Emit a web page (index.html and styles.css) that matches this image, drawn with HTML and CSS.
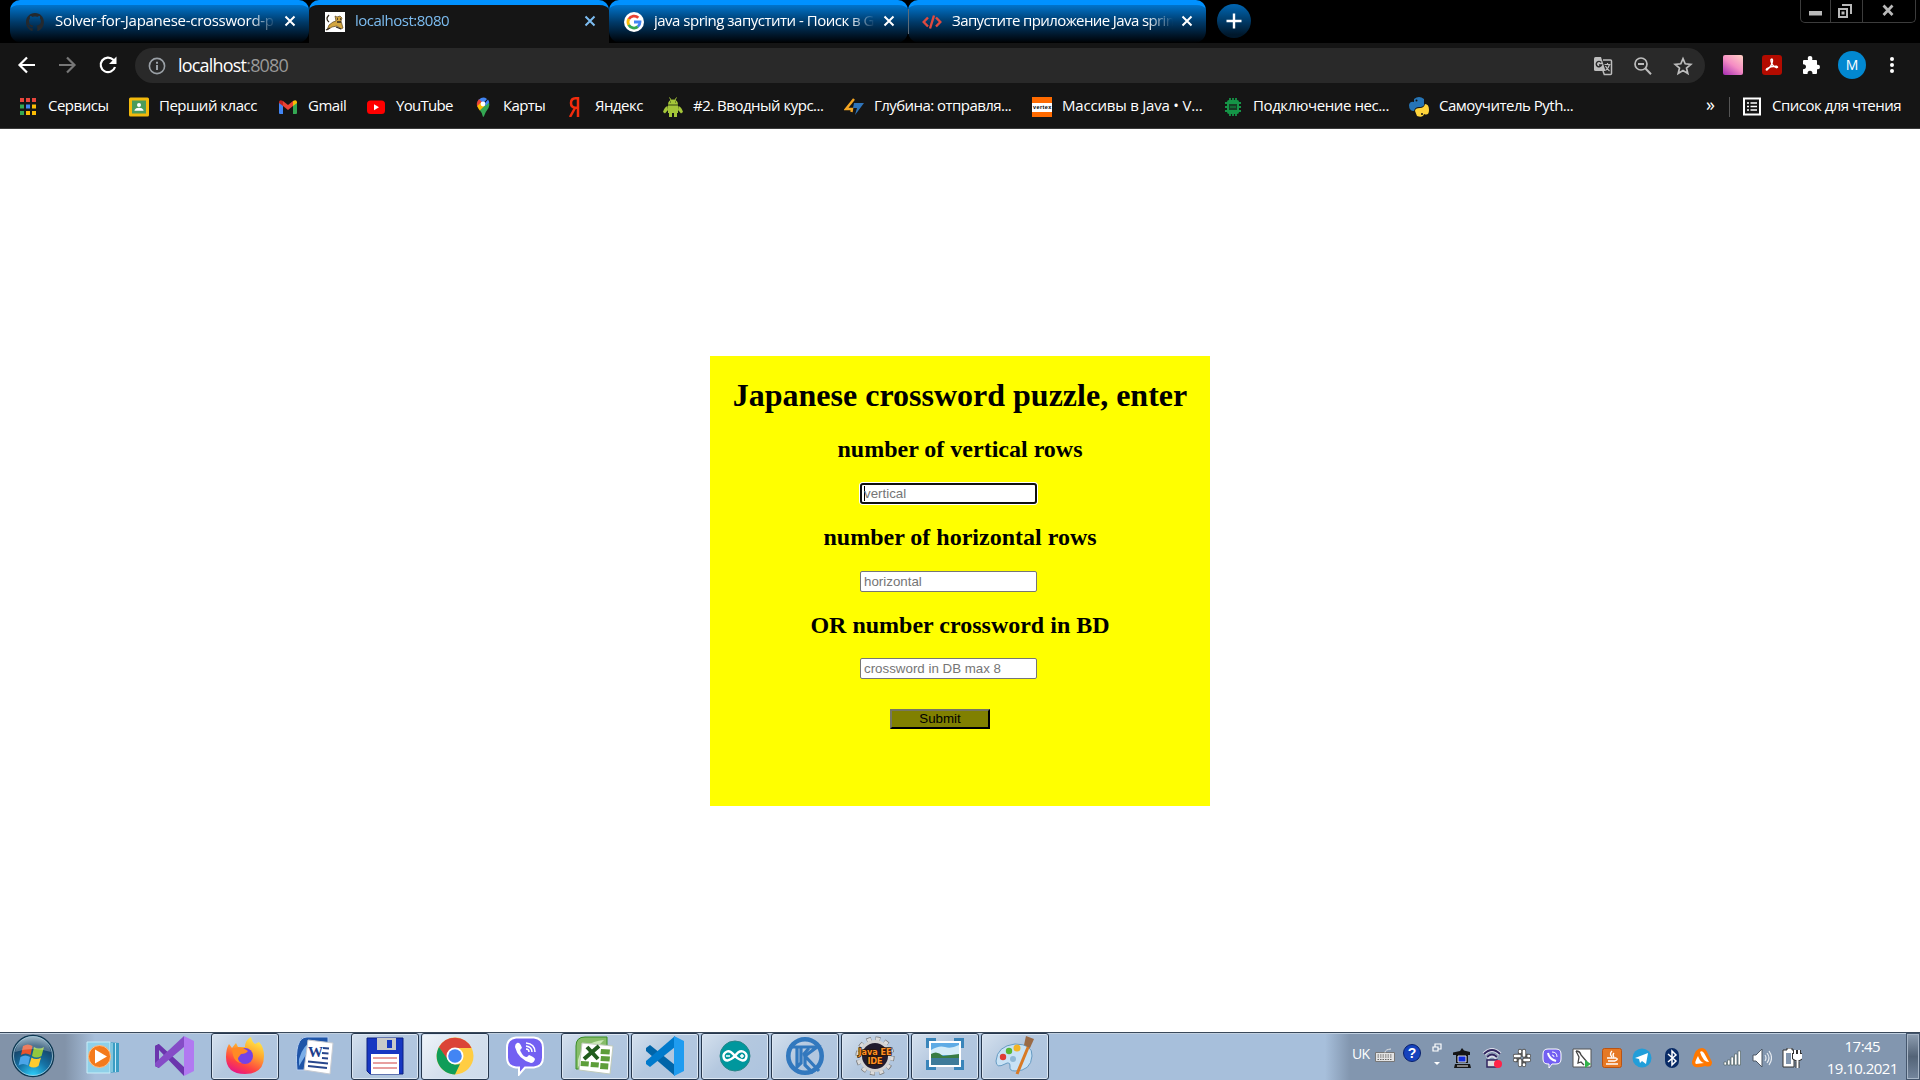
FILE: index.html
```html
<!DOCTYPE html>
<html lang="uk">
<head>
<meta charset="utf-8">
<title>localhost:8080</title>
<link rel="stylesheet" href="styles.css">
</head>
<body>
<header class="tabstrip">
  <div class="tab">
    <svg class="fav" viewBox="0 0 20 20"><path fill="#24292e" d="M10 1C4.800 1 1 5 1 10.200c0 4 2.500 7.500 6 8.700.5.100.6-.2.6-.5v-2.300c-2.500.5-3.200-1-3.400-1.800-.4-.8-1-1-1.400-1.400 1.400-.3 1.900.8 2.500 1.600.7.900 1.800.8 2.400.5.100-.6.400-1 .7-1.300-2.300-.3-4.400-1.200-4.400-4.700 0-1 .4-1.900 1-2.600-.2-.6-.3-1.400.1-2.500 1 0 1.900.5 2.600 1 1.500-.4 3-.4 4.500 0 .8-.5 1.600-1 2.600-1 .4 1.100.3 1.900.1 2.500.6.700 1 1.500 1 2.600 0 3.500-2.200 4.400-4.400 4.700.4.400.8 1 .8 2v2.700c0 .3.200.6.600.5 3.500-1.200 6-4.600 6-8.700C19 5 15.200 1 10 1z"/></svg>
    <span class="tab-title t1">Solver-for-Japanese-crossword-p</span>
    <svg class="x" viewBox="0 0 12 12"><path d="M1.500 1.500l9 9m0-9l-9 9"/></svg>
  </div>
  <div class="tab active">
    <svg class="fav" viewBox="0 0 20 20"><path fill="#fff" d="M0 0h20v20H0z"/><path fill="#d2a53f" stroke="#5c4520" stroke-width=".7" d="M10 4l2 1 3-1 2 2-1 3 2 7-2 1-4-3-5 1-5 3 2-5 4-3 3-1z"/><path fill="none" stroke="#332b20" stroke-width="1.300" d="M4 10Q0 7 4 3M1 18l4-2M12 7h1m2 0h1m-4 3h4M11 15l5 2"/></svg>
    <span class="tab-title t2">localhost:8080</span>
    <svg class="x" viewBox="0 0 12 12"><path d="M1.500 1.500l9 9m0-9l-9 9"/></svg>
  </div>
  <div class="tab">
    <svg class="fav" viewBox="0 0 20 20"><circle cx="10" cy="10" r="10" fill="#fff"/><g fill="none" stroke-width="2.800"><path stroke="#ea4335" d="M4.800 7.200A6 6 0 0 1 14.300 5.800"/><path stroke="#fbbc05" d="M4.800 7a6 6 0 0 0 0 6"/><path stroke="#34a853" d="M4.700 12.800a6 6 0 0 0 9.200 1.800"/><path stroke="#4285f4" d="M10 10h6q0 3-2.200 4.700"/></g></svg>
    <span class="tab-title t3">java spring запустити - Поиск в G</span>
    <svg class="x" viewBox="0 0 12 12"><path d="M1.500 1.500l9 9m0-9l-9 9"/></svg>
  </div>
  <i class="tab-div"></i>
  <div class="tab last">
    <svg class="fav" viewBox="0 0 20 20"><path fill="none" stroke="#e04a3f" stroke-width="2.400" d="M6 5.500L1.700 10 6 14.500M14 5.500l4.300 4.500-4.300 4.500M12 3.500L8 16.500"/></svg>
    <span class="tab-title t4">Запустите приложение Java sprin</span>
    <svg class="x" viewBox="0 0 12 12"><path d="M1.500 1.500l9 9m0-9l-9 9"/></svg>
  </div>
  <div class="newtab"><svg width="16" height="16" viewBox="0 0 16 16"><path d="M8 .5v15M.5 8h15" stroke="#fff" stroke-width="2.400"/></svg></div>
  <div class="winctl">
    <span class="wmin"><svg width="13" height="22" viewBox="0 0 13 22"><path fill="#b9b9b9" d="M0 11h13v4.500H0z"/></svg></span>
    <span class="wres"><svg width="16" height="22" viewBox="0 0 16 22"><path fill="none" stroke="#b9b9b9" stroke-width="2" d="M5 5h9v9M2 9h8v8H2z"/><path fill="#b9b9b9" d="M4.500 11.500h3v3h-3z"/></svg></span>
    <span class="wcls"><svg width="12" height="22" viewBox="0 0 12 22"><path stroke="#b9b9b9" stroke-width="2.700" d="M1.500 5.500l9 9.500m0-9.500l-9 9.500"/></svg></span>
  </div>
</header>

<nav class="toolbar">
  <svg class="nav-ic back" viewBox="0 0 20 20"><path d="M18 10H3M10 2.500L2.500 10l7.500 7.500"/></svg>
  <svg class="nav-ic fwd" viewBox="0 0 20 20"><path d="M2 10h15M10 2.500l7.500 7.500-7.500 7.500"/></svg>
  <svg class="nav-ic rel" viewBox="0 0 20 20"><path d="M17 12A7.300 7.300 0 1 1 15.300 4.800L17 6.500"/><path fill="#fff" stroke="none" d="M18.500 1.500V9H11z"/></svg>
  <div class="omnibox">
    <svg width="18" height="18" viewBox="0 0 18 18"><circle cx="9" cy="9" r="7.600" fill="none" stroke="#9aa0a6" stroke-width="1.600"/><path fill="#9aa0a6" d="M8 8h2v5H8zM8 4.700h2v2H8z"/></svg>
    <span class="url">localhost<span class="port">:8080</span></span>
    <div class="omni-actions">
      <svg width="20" height="20" viewBox="0 0 20 20"><path fill="#bdbdbd" d="M2.500 1H8l4.500 14H2.500Q1 15 1 13.500v-11Q1 1 2.500 1z"/><path fill="none" stroke="#bdbdbd" stroke-width="1.500" d="M10 4h7.500q1 0 1 1v12.500q0 1-1 1h-6.200L10 15"/><path fill="none" stroke="#29292a" stroke-width="1.400" d="M8.200 6.500A2.700 2.700 0 1 0 8.500 9H6"/><path fill="none" stroke="#bdbdbd" stroke-width="1.200" d="M11.500 8.500h6M14.500 7v1.500M16.500 8.500q-1 4-4 6M12.500 10q1.500 3 4 5"/></svg>
      <svg width="20" height="20" viewBox="0 0 20 20"><circle cx="8" cy="8" r="6" fill="none" stroke="#bdbdbd" stroke-width="1.700"/><path stroke="#bdbdbd" stroke-width="2" d="M12.500 12.500L18 18.300M5 8h6"/></svg>
      <svg width="20" height="20" viewBox="0 0 20 20"><path fill="none" stroke="#bdbdbd" stroke-width="1.700" d="M10 2.600l2.200 5.200 5.600.5-4.300 3.700 1.300 5.500-4.800-3-4.800 3 1.300-5.500L2.200 8.300l5.600-.5z"/></svg>
    </div>
  </div>
  <div class="extensions">
    <span class="pink"></span>
    <svg width="20" height="20" viewBox="0 0 20 20"><rect width="20" height="20" rx="3" fill="#b30b00"/><path fill="none" stroke="#fff" stroke-width="1.400" d="M9 4.500q1.700-1.500 1.500 1.500Q10 11 5 15q-1.500 0 0-1.500 4-2.500 9.500-2.300 2 1 .3 1.500-3.300-.7-5-4Q8.500 6 9 4.500z"/></svg>
    <svg width="20" height="20" viewBox="0 0 20 20"><path fill="#fff" d="M3 5h4Q6 1 9 1t2.200 4H15q1 0 1 1v3.800q3-.5 3 2.200t-3 2.200V18q0 1-1 1h-3.500q0-3.300-2.500-3.300T6.500 19H3q-1 0-1-1v-3.700q3-.3 3-2.500T2 9.300V6q0-1 1-1z"/></svg>
    <span class="avatar">M</span>
    <svg width="6" height="20" viewBox="0 0 6 20"><g fill="#fff"><circle cx="3" cy="4" r="2"/><circle cx="3" cy="10" r="2"/><circle cx="3" cy="16" r="2"/></g></svg>
  </div>
</nav>

<nav class="bookmarks">
  <a class="bm b1"><svg viewBox="0 0 20 20"><g fill="#e8453c"><path d="M2 1h4v4H2zM8 1h4v4H8zM14 1h4v4h-4z"/></g><path fill="#34a853" d="M2 7.500h4v4H2zM2 14h4v4H2z"/><path fill="#4285f4" d="M8 7.500h4v4H8z"/><path fill="#fbbc05" d="M14 7.500h4v4h-4zM8 14h4v4H8zM14 14h4v4h-4z"/></svg><span>Сервисы</span></a>
  <a class="bm b2"><svg viewBox="0 0 20 20"><rect width="20" height="19" y=".5" rx="1.500" fill="#f2b90c"/><path fill="#4b9b5b" d="M3 3.500h14v13H3z"/><circle cx="10" cy="8" r="2" fill="#fff"/><path fill="#fff" d="M5.500 13q1-2.300 4.500-2.300t4.500 2.300v.8h-9z"/></svg><span>Перший класс</span></a>
  <a class="bm b3"><svg viewBox="0 0 20 20"><path fill="#4285f4" d="M1 5l4 3v9H2q-1 0-1-1z"/><path fill="#34a853" d="M15 8l4-3v11q0 1-1 1h-3z"/><path fill="#ea4335" d="M5 4l5 4 5-4v5l-5 4-5-4z"/><path fill="#c5221f" d="M1 5q.5-3 4-1v5L1 6z"/><path fill="#fbbc04" d="M19 5q-.5-3-4-1v5l4-3z"/></svg><span>Gmail</span></a>
  <a class="bm b4"><svg viewBox="0 0 20 20"><rect x="1" y="3.500" width="18" height="13.500" rx="3.500" fill="#f00"/><path fill="#fff" d="M8 7.300l5 3-5 3z"/></svg><span>YouTube</span></a>
  <a class="bm b5"><svg viewBox="0 0 20 20"><path fill="#34a853" d="M10 20q-.7-4-3.500-7.200L16 5q1 3-.5 6-3 4-4 7-.5 2-1.500 2z"/><path fill="#4285f4" d="M6 2.500Q10-1 14 2l-5 6-4.500-3z"/><path fill="#ea4335" d="M6 2.200L9 5l-4.500 5q-2-4 1.500-7.800z"/><path fill="#fbbc04" d="M4.200 9L8 5.500l4 3-5.300 5Q5 11.500 4.200 9z"/><path fill="#4285f4" d="M12 6l3-3.500q1 1.300 1.200 3L12.500 9z"/><circle cx="10" cy="7" r="2.400" fill="#fff"/></svg><span>Карты</span></a>
  <a class="bm b6"><svg viewBox="0 0 20 20"><path fill="none" stroke="#f22c0d" stroke-width="2.500" d="M13 20V1.300h-2.500Q6 1.500 6 6t4.500 4.800H13M10 11L5 20"/></svg><span>Яндекс</span></a>
  <a class="bm b7"><svg viewBox="0 0 20 20"><g fill="#a4c639"><path d="M5 8q0-5.500 5-5.500T15 8v8H5zM6 16h3v4H6zM11 16h3v4h-3zM4.500 9q-3 1-4.500 6l2 1.500L5 13zM15.500 9q3 1 4.500 6l-2 1.500-3-3.500z"/><path stroke="#a4c639" d="M6.500.5L8 3M13.500.5L12 3"/></g><path stroke="#344514" d="M5 8h10M7 5h1m4 0h1"/></svg><span>#2. Вводный курс...</span></a>
  <a class="bm b8"><svg viewBox="0 0 20 20"><path fill="none" stroke="#f5a623" stroke-width="2.400" d="M10 2L2 12h6l-.5 3"/><path fill="#2f74ba" d="M10 6h10L11 18l2-7H9z"/></svg><span>Глубина: отправля...</span></a>
  <a class="bm b9"><svg viewBox="0 0 20 20"><path fill="#ff6a00" d="M0 0h20v20H0z"/><path fill="#fff" d="M0 6h20v9H0z"/><text x="1" y="12" font-family="Liberation Sans" font-weight="bold" font-size="5.500" textLength="18">vertex</text></svg><span>Массивы в Java • V...</span></a>
  <a class="bm b10"><svg viewBox="0 0 20 20"><rect x="4" y="3" width="12" height="14" rx="2" fill="#159447"/><path stroke="#159447" stroke-width="1.800" d="M7 1v18M10 1v18M13 1v18M2 6h16M2 10h16M2 14h16"/><path fill="#153d25" d="M6 7h8v6H6z"/><path stroke="#159447" d="M7 10h6"/></svg><span>Подключение нес...</span></a>
  <a class="bm b11"><svg viewBox="0 0 20 20"><path fill="#2674b5" d="M5 2q5-4 10 0v6q-1 2-5 2-4 0-5 4-5 0-5-6 1-4 5-3z"/><path fill="#ffd43b" d="M16 7q4 0 4 6t-5 4q-1 4-7 2l-2-5q0-3 5-3 4 0 5-4z"/><circle cx="7.500" cy="3.500" r="1" fill="#111"/><circle cx="13" cy="17" r="1" fill="#111"/></svg><span>Самоучитель Pyth...</span></a>
  <div class="bm-right">
    <span class="more">»</span>
    <i class="sep"></i>
    <svg width="18" height="20" viewBox="0 0 18 20"><rect x="1" y="1.500" width="16" height="16" fill="none" stroke="#fff" stroke-width="2"/><path stroke="#fff" stroke-width="1.700" d="M4 6h2m1.500 0H14M4 9.500h2m1.500 0H14M4 13h2m1.500 0H14"/></svg>
    <span class="reading">Список для чтения</span>
  </div>
</nav>

<main class="page">
  <form class="card">
    <h1>Japanese crossword puzzle, enter</h1>
    <h2>number of vertical rows</h2>
    <div class="field focused"><i class="caret"></i>vertical</div>
    <h2>number of horizontal rows</h2>
    <div class="field">horizontal</div>
    <h2 class="alt">OR number crossword in BD</h2>
    <div class="field">crossword in DB max 8</div>
    <button class="submit" type="button">Submit</button>
  </form>
</main>

<footer class="taskbar">
  <div class="start"><svg width="44" height="44" viewBox="0 0 44 44"><defs><radialGradient id="orb" cx=".5" cy="1" r="1"><stop offset="0" stop-color="#2fd4ff"/><stop offset=".4" stop-color="#1673a6"/><stop offset=".75" stop-color="#164469"/><stop offset="1" stop-color="#8ba9bd"/></radialGradient></defs><circle cx="22" cy="22" r="20.500" fill="url(#orb)" stroke="#0e3852" stroke-width="1.500"/><circle cx="22" cy="22" r="19.500" fill="none" stroke="#b9dceb" stroke-opacity=".7"/><path fill="#e8532b" d="M12 12q5-3 9.500 0l-2 9q-5-3-9.500 0z"/><path fill="#93c83e" d="M23 13q5 3 10 0l-2.500 9q-5 3-9.500 0z"/><path fill="#4ba5e8" d="M9.500 23q5-3 9.500 0l-2 8.500q-5-3-9.500 0z"/><path fill="#ffcb2e" d="M20.500 23.500q5 3 9.500 0L27.500 32q-5 3-9.500 0z"/><path fill="#fff" fill-opacity=".25" d="M4 18Q8 3 22 3t18 15q-18-6-36 0z"/></svg></div>
  <div class="task"><svg viewBox="0 0 40 40"><path fill="#3b9dc4" d="M22 6l12 1v29l-12 1z"/><path stroke="#c6ecf7" d="M27 7v29M30.500 7v29"/><path fill="#8fd0e8" stroke="#c9eef8" d="M2 6h23v31H2z"/><circle cx="14.500" cy="20.500" r="11" fill="#f47a1c" stroke="#ffc08a"/><path fill="#fff" d="M10 13.500l12 7-12 7z"/></svg></div>
  <div class="task"><svg viewBox="0 0 40 40"><path fill="#52218a" d="M0 10l4-2v24l-4-2z"/><path fill="#6b35ad" d="M0 10l4-2 25 23V40L4 14v16l-4 0z"/><path fill="#854cc7" d="M4 32l-4-2v-3L29 0v11z"/><path fill="#b179f1" d="M29 0l10 5v30l-10 5z"/></svg></div>
  <div class="task open"><svg viewBox="0 0 40 40"><defs><linearGradient id="fx" x1=".8" y1="0" x2=".3" y2="1"><stop offset="0" stop-color="#fff34d"/><stop offset=".4" stop-color="#ffa52d"/><stop offset=".75" stop-color="#ff4342"/><stop offset="1" stop-color="#e61587"/></linearGradient></defs><path fill="url(#fx)" d="M4 8l3 4 4-5 2 4h7q0-7 6-10 1 5 4 7l4-2q5 5 5 14 0 18-19 18T1 21Q1 13 4 8z"/><circle cx="20" cy="20" r="8" fill="#7542e5"/><path fill="#ff8a25" d="M7 13q5-3 11-1l5 3q-2 3-7 3l-3 4q0 4 4 5-9 0-10-14z"/></svg></div>
  <div class="task"><svg viewBox="0 0 40 40"><path fill="#1f55a8" stroke="#b5cdf0" d="M2 34Q-1 1 12 1h21v33z"/><path fill="#7bafe8" d="M4 23Q8 8 20 4L4 30z"/><path fill="#fff" stroke="#c7cbd2" d="M13 4l25 3-3 31-26-4z"/><text x="13" y="21" fill="#1e3e8c" font-family="Liberation Serif" font-weight="bold" font-size="15">W</text><path stroke="#27468c" stroke-width="2" d="M28 12l6 .5m-7 4.500l6.500.5M27 22l6 .5M13 25.500l20 2M13 30l19 2"/></svg></div>
  <div class="task open"><svg viewBox="0 0 40 40"><path fill="#1737c2" stroke="#0c2080" d="M2 2h36v36H5l-3-3z"/><path fill="#c9c9c9" d="M12 2h19v12H12z"/><path fill="#1737c2" d="M22 4h5v8h-5z"/><path fill="#fff" d="M6 18h28v20H6z"/><path stroke="#e08080" stroke-width="1.500" d="M8 22h24M8 27h24M8 32h24"/></svg></div>
  <div class="task open current"><svg viewBox="0 0 40 40"><circle cx="20" cy="20" r="18.500" fill="#ffcd42"/><path fill="#db4437" d="M4 11A18.500 18.500 0 0 1 36.500 12H20l-8 12z"/><path fill="#0f9d58" d="M4 11l9 13q4 6 12 4l-5 10.500A18.500 18.500 0 0 1 4 11z"/><circle cx="20" cy="20" r="8.500" fill="#fff"/><circle cx="20" cy="20" r="6.800" fill="#4285f4"/></svg></div>
  <div class="task"><svg viewBox="0 0 40 40"><path fill="#7360f2" stroke="#fff" stroke-width="2" d="M11 1.500h18q9 1 9 10v10q0 9-9 10h-9l-6 7v-7h-3q-9-1-9-10v-10q0-9 9-10z"/><path fill="#fff" d="M12 7q3-1 5 5-3 2-1 4 2 5 6 5l2-2q5 2 6 4-1 4-4 4Q13 23 10 11q0-3 2-4z"/><path fill="none" stroke="#fff" stroke-width="1.500" d="M21 7q9 1 9 9M21 10q6 1 6 6M21 13q3 0 3 3"/></svg></div>
  <div class="task open"><svg viewBox="0 0 40 40"><path fill="#86bd68" stroke="#378c24" d="M1 33V10q0-9 9-9h22v32z"/><path fill="#c9e8b5" d="M3 24Q7 6 29 4L3 31z"/><path fill="#fff" stroke="#c0cbbb" d="M7 7l31 3-3 28-31-4z"/><path fill="#5d9e3a" d="M26 13l9 .5-.5 5-9-.5zM26 20l9 .5-.5 5-9-.5zM6 25l8 .5-.5 5-8-.5zM16 26l8 .5-.5 5-8-.5zM25.500 27l8 .5-.5 6-8-.5z"/><path stroke="#215c1d" stroke-width="4" d="M12 11l11 12M24 10L9 23"/></svg></div>
  <div class="task open"><svg viewBox="0 0 40 40"><path fill="#0065a9" d="M1 12l4-3 25 20v11L1 15z"/><path fill="#007acc" d="M1 28l4 3 25-20V0L1 25z"/><path fill="#1f9cf0" d="M29 0l10 5v30l-10 5z"/></svg></div>
  <div class="task open"><svg viewBox="0 0 40 40"><circle cx="20" cy="20" r="15" fill="#00979d" stroke="#278587"/><path fill="none" stroke="#fff" stroke-width="2.400" d="M20 20q-5-6-8-4.500-4 2-3.500 5 .5 4 4 4Q16 24 20 20q4-6 8-4.500 4 2 3.500 5-.5 4-4 4Q24 24 20 20z"/><path stroke="#fff" stroke-width="1.500" d="M11 20h4M25 20h4m-2-2v4"/></svg></div>
  <div class="task open"><svg viewBox="0 0 40 40"><circle cx="20" cy="20" r="16.700" fill="none" stroke="#3278be" stroke-width="4.600"/><path fill="none" stroke="#3278be" stroke-width="3.200" d="M4 11h28L20 20l14 15M12 11v20l4-4V11M20 20v9l8 8"/><path stroke="#3278be" stroke-width="3" d="M24 12l-6 7"/></svg></div>
  <div class="task open"><svg viewBox="0 0 40 40"><circle cx="20" cy="20" r="17.300" fill="none" stroke="#777" stroke-width="4.500" stroke-dasharray="4.700 4.360"/><circle cx="20" cy="20" r="17" fill="none" stroke="#dcdcdc" stroke-width="3.500" stroke-dasharray="3.900 5" stroke-dashoffset="-.4"/><circle cx="20" cy="20" r="14.500" fill="#211b2d" stroke="#d2d2d2" stroke-width="3"/><g fill="#ff9022" stroke="#2a1405" stroke-width="1.500" paint-order="stroke" font-family="DejaVu Sans" font-weight="bold" font-size="8.500" text-anchor="middle"><text x="20" y="19" textLength="33" lengthAdjust="spacingAndGlyphs">Java EE</text><text x="20" y="28" textLength="15">IDE</text></g></svg></div>
  <div class="task open"><svg viewBox="0 0 40 40"><path fill="#3985ba" d="M1 2h10v10H1zM29 2h10v10H29zM1 24h10v10H1zM29 24h10v10H29z"/><path fill="#fff" d="M4 5h32v26H4z"/><path fill="#5eabe5" d="M6 7h28v22H6z"/><path fill="#d2ebf8" d="M6 14q8-5 14-3t14-2v10H6z"/><path fill="#397c43" d="M6 18q6-4 12 2l16-2v4H6z"/><path fill="#3e7b9a" d="M6 22h28v7H6z"/></svg></div>
  <div class="task open"><svg viewBox="0 0 40 40"><path fill="#c8e2f5" stroke="#659ac2" d="M1 25Q2 10 20 8q18 0 17 12-1 15-17 15-6 0-5-5 0-5-5-2-9 5-9-3z"/><circle cx="8" cy="21" r="3.200" fill="#df3c35"/><circle cx="14" cy="15" r="3.200" fill="#58b635"/><circle cx="22" cy="12" r="3.500" fill="#f3b426"/><circle cx="18" cy="23" r="3" fill="#8fb8d6"/><path stroke="#d87a25" stroke-width="3" d="M34 9L22 38"/><path fill="#9a6a45" d="M31 0l8 3-4 9-6-3z"/></svg></div>

  <div class="tray">
    <span class="lang">UK</span>
    <svg class="kb" viewBox="0 0 20 20"><path fill="#e4e4e4" stroke="#777" d="M.5 7.500h19v9H.500z"/><path stroke="#666" stroke-dasharray="1.500 1" d="M2.500 10h15M2.500 12h15M2.500 14.500h15"/><path fill="none" stroke="#e4e4e4" d="M10 7.500q0-3 6-3.500"/></svg>
    <svg class="help" viewBox="0 0 20 20"><circle cx="10" cy="10" r="8.500" fill="#1643bd" stroke="#08206d"/><text x="10" y="15" fill="#fff" font-family="Liberation Sans" font-weight="bold" font-size="14" text-anchor="middle">?</text></svg>
    <svg class="lb" viewBox="0 0 12 28"><path fill="none" stroke="#fff" stroke-width="1.200" d="M4 6V3h6v5H7M2 6h5v4H2z"/><path fill="#fff" d="M3 21h6l-3 3z"/></svg>
    <svg viewBox="0 0 20 20"><path fill="#151515" d="M1 4.500L8 3l2-3 2 2.500L18 4v3H1zM4 6h12v9H4zM3 16h15l1 4H2z"/><path fill="#122edb" stroke="#ddd" d="M6 8h8v6H6z"/><path stroke="#eee" d="M5 18h11"/></svg>
    <svg viewBox="0 0 20 20"><path fill="none" stroke="#d9dce8" stroke-width="4" d="M2 6q8-8 16 0M5 10q5-5 10 0"/><path fill="none" stroke="#30255f" stroke-width="2" d="M2 6q8-8 16 0M5 9q5-5 10 0"/><path fill="#ddd" stroke="#30255f" stroke-width="1.500" d="M5 12h10v7H5z"/><circle cx="16" cy="16" r="4" fill="#ff2348"/></svg>
    <svg viewBox="0 0 20 20"><path id="sl" fill="none" stroke="#555" stroke-width="4.300" stroke-linecap="round" d="M8 3v4.500M17 8h-4.500M12 17v-4.500M3 12h4.500M3 8h4.500M12 3v4.500M17 12h-4.500M8 17v-4.500"/><path fill="none" stroke="#fff" stroke-width="2.600" stroke-linecap="round" d="M8 3v1M3 8h4.500M12 3v4.500M16.500 8h.5M17 12h-4.500M12 16.500v.5M8 17v-4.500M3 12h.5"/></svg>
    <svg viewBox="0 0 20 20"><path fill="#7360f2" stroke="#fff" d="M6 1h8q5 0 5 5v5q0 5-5 5h-4l-3 4v-4H6q-5 0-5-5V6q0-5 5-5z"/><path fill="none" stroke="#fff" stroke-width="2" d="M6 5q1 6 8 8"/><path fill="none" stroke="#fff" d="M10 4q5 0 5 5m-5-2q2 0 2 2"/></svg>
    <svg viewBox="0 0 20 20"><path fill="#fff" stroke="#555" d="M1 1h18v18H1z"/><path fill="none" stroke="#444" stroke-width="1.300" d="M4 3q4 0 5 4l6 7M4 3l3 6-1 6 3-1 3 3"/><path fill="#32b44a" d="M13 12l6 4-6 4z"/></svg>
    <svg viewBox="0 0 20 20"><rect x=".5" y=".5" width="19" height="19" rx="2" fill="#e67924" stroke="#b95313"/><path fill="none" stroke="#fff" stroke-width="1.300" d="M10 3q-3 3 0 6M12 5q-2 2 0 4M5 10h9q3 1-1 3M6 13h7M4 16h12"/></svg>
    <svg viewBox="0 0 20 20"><circle cx="10" cy="10" r="9.500" fill="#229ed9"/><path fill="#fff" d="M3 10l13-5-2 11-4-3-2 2-1-4z"/></svg>
    <svg viewBox="0 0 20 20"><rect x="3" y="0" width="14" height="20" rx="7" fill="#092b66"/><path fill="none" stroke="#fff" stroke-width="1.500" d="M6 6l8 7-4 4V3l4 4-8 7"/></svg>
    <svg viewBox="0 0 20 20"><path fill="#ff7800" d="M10 0q4 0 6 6l4 8q0 6-7 4-6 2-10 1-5-3-2-8Q3 0 10 0z"/><path fill="#fff" d="M8 4q2-2 4 1l5 9q-6 0-9-10zM6 8q2 6 6 7l-8 1q-2-1 2-8z"/></svg>
    <svg viewBox="0 0 20 20"><path fill="#fff" stroke="#566" stroke-width=".7" d="M2 14h2.500v3H2zM5.500 12H8v5H5.500zM9 9h2.500v8H9zM12.500 6H15v11h-2.500zM16 3h2.500v14H16z"/></svg>
    <svg viewBox="0 0 20 20"><path fill="#fff" stroke="#4c5662" d="M1 7h3l6-6v18l-6-6H1z"/><path fill="none" stroke="#e6ebf0" stroke-width="1.200" d="M13 7q2 3 0 6m2-8q4 5 0 10m2-12q5 7 0 14"/></svg>
    <svg viewBox="0 0 20 20"><path fill="#fff" stroke="#333" d="M3 2h2V0h5v2h2v17H1V2z"/><path fill="#8296af" d="M4 5h5v11H4z"/><path fill="none" stroke="#333" stroke-width="4" d="M13 2v4m4-4v4m-5 1h7v3q-3.500 3-7 0zM15.500 12v8"/><path fill="#fff" stroke="#fff" stroke-width="2" d="M13 2v4m4-4v4m-5 1h7v3q-3.500 3-7 0zM15.500 12v8"/></svg>
    <div class="clock"><span>17:45</span><span>19.10.2021</span></div>
    <div class="desk"></div>
  </div>
</footer>
</body>
</html>
```
FILE: styles.css
```css
* { box-sizing: border-box; }
body {
  margin: 0; width: 1920px; height: 1080px; overflow: hidden;
  display: flex; flex-direction: column; background: #fff;
  font: 15px "Open Sans", "Noto Sans", sans-serif; color: #fff;
}
svg { display: block; flex: none; }

/* tab strip */
.tabstrip { height: 43px; background: #000; display: flex; padding-left: 10px; }
.tab {
  width: 299px; height: 43px; padding: 0 13px 0 15px; display: flex; align-items: center;
  border-top: 5px solid #0091ff; border-radius: 10px 10px 12px 12px;
  background: linear-gradient(#0074cc, #003a69 45%, #000b16 90%, #000);
}
.tab.active { background: #151515; border-radius: 10px 10px 0 0; color: #7cbcf0; width: 300px; padding-left: 16px; }
.tab.last { width: 298px; padding-left: 14px; }
.tab-div { width: 1px; height: 25px; margin: 9px -1px 0 0; background: #5c6b78; z-index: 1; }
.fav { width: 20px; height: 20px; margin: -5px 10px 0 0; }
.tab-title { width: 221px; margin-top: -8px; overflow: hidden; white-space: nowrap; line-height: 24px;
  -webkit-mask-image: linear-gradient(90deg, #000 88%, transparent); mask-image: linear-gradient(90deg, #000 88%, transparent); }
.x { width: 12px; height: 12px; margin: -6px 0 0 auto; fill: none; stroke: #fff; stroke-width: 2; }
.active .x { stroke: #7cbcf0; }
.t1 { letter-spacing: -.28px; } .t2 { letter-spacing: -.45px; }
.t2 { letter-spacing: -.5px; }
.t3 { letter-spacing: -.5px; } .t4 { letter-spacing: -.6px; }
.newtab { width: 34px; height: 34px; margin: 4px 0 0 11px; border-radius: 50%; display: grid; place-items: center;
  background: linear-gradient(#0066b3, #00182c 90%); }
.winctl { margin: 0 4px 0 auto; display: flex; width: 116px; height: 23px; border: solid #3c3c3c; border-width: 0 1px 1px; border-radius: 0 0 5px 5px; }
.winctl span { display: grid; place-items: center; border-right: 1px solid #3c3c3c; }
.wmin { width: 30px; } .wres { width: 32px; padding-right: 4px; }
.winctl .wcls { flex: 1; border: 0; padding-right: 2px; }

/* toolbar */
.toolbar { height: 43px; padding: 0 25px 0 17px; display: flex; align-items: center; background: #151515; }
.nav-ic { width: 20px; height: 20px; fill: none; stroke: #fff; stroke-width: 2.200; margin-right: 20px; }
.nav-ic.fwd { stroke: #777; margin-right: 21px; }
.nav-ic.rel { margin-right: 17px; }
.omnibox { width: 1570px; height: 35px; margin-top: 2px; border-radius: 18px; background: #292929; padding: 0 12px 0 13px; display: flex; align-items: center; }
.url { margin: -2px 0 0 12px; font-size: 18px; letter-spacing: -.8px; }
.port { color: #999; }
.omni-actions { margin-left: auto; display: flex; gap: 20px; }
.extensions { margin-left: auto; display: flex; align-items: center; gap: 19px; }
.pink { width: 20px; height: 20px; border-radius: 2px; background: linear-gradient(35deg, #a52bb2, #f58dc4 50%, #ffd2c4); }
.avatar { width: 28px; height: 28px; margin: 0 4px 0 -2px; border-radius: 50%; background: #0288d1; text-align: center; line-height: 28px; font-size: 14px; }

/* bookmarks */
.bookmarks { height: 43px; padding: 0 18px 1px; display: flex; align-items: center; background: #151515; border-bottom: 1px solid #3b3b3b; }
.bm { display: flex; align-items: center; gap: 10px; white-space: nowrap; flex: none; letter-spacing: -.5px; }
.bm svg { width: 20px; height: 20px; }
.bm span { margin-top: -3px; }
.b1 { width: 111px; } .b2 { width: 149px; }
.b3 { width: 88px; } .b4 { width: 107px; letter-spacing: -.7px; }
.b5 { width: 92px; letter-spacing: -.6px; } .b6 { width: 98px; }
.b7 { width: 181px; } .b8 { width: 188px; letter-spacing: -.55px; }
.b9 { width: 191px; letter-spacing: -.2px; } .b10 { width: 186px; letter-spacing: -.4px; }
.bm-right { margin-left: auto; display: flex; align-items: center; white-space: nowrap; }
.more { font-size: 18px; line-height: 20px; margin-top: -6px; }
.sep { width: 1px; height: 20px; background: #555; margin: 0 13px 0 14px; }
.reading { margin: -3px 0 0 11px; width: 130px; letter-spacing: -.5px; }

/* page content */
.page { height: 903px; padding-top: 227px; }
.card { width: 500px; height: 450px; margin: 0 auto; padding-top: 21px; background: #ff0; color: #000; font-family: "Liberation Serif", serif; display: flex; flex-direction: column; }
.card h1 { margin: 0 0 18px; font-size: 32px; line-height: 36px; text-align: center; }
.card h2 { margin: 0; height: 52px; font-size: 24px; line-height: 36px; text-align: center; }
.card h2.alt { height: 51px; }
.field { width: 177px; height: 21px; margin: 0 0 15px 150px; padding: 0 3px; border: 1px solid #767676; border-radius: 2px; background: #fff; color: #757575; font: 13.333px/19px "Liberation Sans", sans-serif; display: flex; }
.focused { border: 2px solid #101010; border-radius: 3px; padding: 0 2px; line-height: 17px; box-shadow: 0 0 0 1px #fff; }
.caret { width: 1px; height: 15px; margin: 1px -1px 0 0; background: #000; }
.submit { width: 100px; height: 20px; margin: 15px 0 0 180px; padding: 0; border: 2px outset #767676; border-color: #767662 #2b2b20 #2b2b20 #767662; background: #808000; color: #000; font: 13.333px/16px "Liberation Sans", sans-serif; }

/* taskbar */
.taskbar { height: 48px; display: flex; border-top: 1px solid #39485a; box-shadow: inset 0 1px #c0cfdf;
  background: linear-gradient(90deg, #8293a9 0, #8293a9 65px, #a7bfdb 95px, #a7bfdb 1325px, #8296af 1350px, #8296af); }
.start { width: 71px; padding: 1px 0 0 11px; }
.task { width: 68px; height: 47px; margin-right: 2px; display: grid; place-items: center; flex: none; }
.task svg { width: 40px; height: 40px; margin-top: -1px; }
.task.open { border: 1px solid #26374d; border-radius: 3px; box-shadow: inset 0 0 0 1px #dce7f3; background: linear-gradient(135deg, #d5e1ee, #b4c8df 45%, #adc4df); }
.task.current { background: linear-gradient(135deg, #f0f5fa, #d5e0ed 50%, #cddbea); }
.tray { margin-left: auto; width: 568px; display: flex; align-items: center; }
.tray svg { width: 20px; height: 20px; margin: 2px 10px 0 0; }
.lang { width: 24px; font-size: 14px; letter-spacing: -.8px; margin-top: -6px; }
.tray .kb { margin: -3px 6px 0 0; }
.tray .help { margin: -7px 7px 0 1px; }
.tray .lb { width: 12px; height: 28px; margin: -3px 14px 0 2px; }
.tray .lb + svg { margin-left: -5px; }
.clock { margin-left: 6px; width: 90px; display: flex; flex-direction: column; text-align: center; line-height: 22px; letter-spacing: -.55px; margin-top: 0; }
.desk { width: 14px; height: 47px; margin-left: auto; border: 1px solid #44566d; box-shadow: inset 0 0 0 1px #a8b6c7; background: linear-gradient(#8f9fb2, #536377 50%, #74869d); }
```
